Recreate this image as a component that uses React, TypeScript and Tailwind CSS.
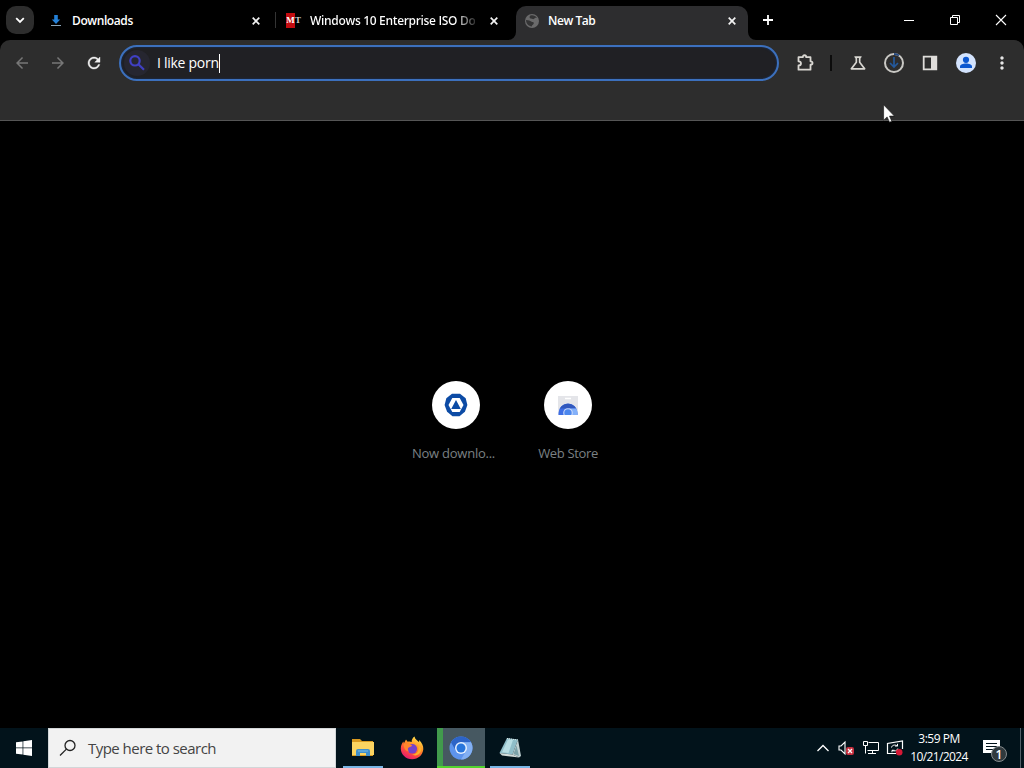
import type { ReactNode } from "react";
import { MdArrowBack, MdArrowForward, MdOutlineScience, MdMoreVert } from "react-icons/md";

function Tab({ icon, title, active = false }: { icon: ReactNode; title: ReactNode; active?: boolean }) {
  return (
    <div className={`relative flex h-[34px] w-[232px] shrink-0 items-center pb-[5px] pl-2 pr-[10px] ${active ? "rounded-t-[10px] bg-[#2d2d2f]" : ""}`}>
      {active && (
        <>
          <svg className="absolute -left-2 bottom-0" width="8" height="8" viewBox="0 0 8 8"><path d="M8 0v8H0a8 8 0 0 0 8-8z" fill="#2d2d2f" /></svg>
          <svg className="absolute -right-2 bottom-0" width="8" height="8" viewBox="0 0 8 8"><path d="M0 0v8h8a8 8 0 0 1-8-8z" fill="#2d2d2f" /></svg>
        </>
      )}
      <span className="flex w-4 shrink-0 justify-center">{icon}</span>
      <span className="ml-2 whitespace-nowrap text-[12px] font-semibold leading-4">{title}</span>
      <svg className="ml-auto shrink-0" width="12" height="12" viewBox="0 0 12 12" fill="none" stroke="#f2f2f2" strokeWidth="1.7"><path d="M2.7 2.7l6.6 6.6M9.3 2.7L2.7 9.3" /></svg>
    </div>
  );
}

function TabStrip() {
  return (
    <div className="flex h-10 shrink-0 bg-black pt-[6px]">
      <div className="ml-[6px] mr-[6px] flex h-7 w-7 shrink-0 items-center justify-center rounded-[10px] bg-[#2d2d2d]">
        <svg width="12" height="12" viewBox="0 0 12 12" fill="none" stroke="#fff" strokeWidth="1.8"><path d="M2.2 4.2L6 8l3.8-3.8" /></svg>
      </div>
      <Tab
        icon={<svg width="16" height="16" viewBox="0 0 16 16"><path d="M6.2 2h3.6v4.5h2.4L8 11 3.8 6.500h2.400z" fill="#2380d8" /><path d="M3 12.500h10" stroke="#8aa4b8" strokeWidth="1" /></svg>}
        title={<span className="tracking-[-0.4px]">Downloads</span>}
      />
      <div className="flex w-[6px] shrink-0 justify-center pt-[6px]"><div className="h-4 w-px bg-[#343434]" /></div>
      <Tab
        icon={<span className="flex h-4 w-4 items-center font-['Liberation_Serif',serif] text-[9px] font-bold leading-none"><span className="flex h-[15px] w-[9px] items-center justify-center bg-[#c30c10]">M</span><span className="text-[#c9c9c9]">T</span></span>}
        title={<span className="block bg-gradient-to-r from-white from-[88%] to-[#333333] bg-clip-text tracking-[-0.33px] text-transparent">Windows 10 Enterprise ISO Do</span>}
      />
      <div className="w-[6px] shrink-0" />
      <Tab
        active
        icon={<svg width="16" height="16" viewBox="0 0 16 16"><circle cx="8" cy="8" r="7" fill="#6a6a6b" /><path d="M2 7c3 .1 4 .8 5.200 1.600 1 .8 2.600.2 2.600 1.600 0 1.500-1.800 1.300-2 3.200C4.500 13.300 2 10.500 2 7zM6.300 2.500c2.500-.8 5.300.1 6.700 2.300-1.500-.3-2.300.2-2.900 1-1 .8-2.100-.1-3.300-.2-1.200-.2-1.800-1.800-.5-3.100z" fill="#343435" /></svg>}
        title={<span className="tracking-[-0.45px]">New Tab</span>}
      />
      <div className="ml-[6px] flex h-7 w-7 items-center justify-center">
        <svg width="14" height="14" viewBox="0 0 14 14" stroke="#fff" strokeWidth="1.8"><path d="M7 2v10M2 7h10" /></svg>
      </div>
      <div className="-mt-[6px] ml-auto flex h-10">
        <div className="flex w-[46px] items-center justify-center"><svg width="12" height="12" viewBox="0 0 12 12"><path d="M1 6.5h10" stroke="#fff" /></svg></div>
        <div className="flex w-[46px] items-center justify-center"><svg width="12" height="12" viewBox="0 0 12 12" fill="none" stroke="#fff"><path d="M1.5 3.5h7v7h-7zM3.5 3.5v-2h7v7h-2" /></svg></div>
        <div className="flex w-[46px] items-center justify-center"><svg width="12" height="12" viewBox="0 0 12 12"><path d="M1 1l10 10M11 1L1 11" stroke="#fff" strokeWidth="1.1" /></svg></div>
      </div>
    </div>
  );
}

function Toolbar() {
  return (
    <div className="h-[81px] shrink-0 bg-black">
      <div className="h-full rounded-t-[10px] border-b border-[#555555] bg-[#2d2d2d] pt-[5px]">
        <div className="flex h-9 items-center">
          <div className="flex w-[119px] shrink-0 items-center pl-3">
            <span className="flex w-5 justify-center"><MdArrowBack size={18} color="#777777" /></span>
            <span className="ml-4 flex w-5 justify-center"><MdArrowForward size={18} color="#777777" /></span>
            <span className="ml-4 flex w-5 justify-center">
              <svg width="18" height="18" viewBox="0 0 24 24"><path d="M17.65 6.35C16.2 4.9 14.21 4 12 4c-4.42 0-7.99 3.58-7.99 8s3.57 8 7.99 8c3.73 0 6.84-2.55 7.73-6h-2.08c-.82 2.33-3.04 4-5.65 4-3.31 0-6-2.69-6-6s2.69-6 6-6c1.66 0 3.14.69 4.22 1.78L13 11h7V4l-2.35 2.35z" fill="#f0f0f0" stroke="#f0f0f0" strokeWidth="0.5" /></svg>
            </span>
          </div>
          <div className="flex h-9 w-[660px] shrink-0 items-center rounded-full border-2 border-[#3c70bd] bg-[#202024] pl-[3px] text-[14px] shadow-[inset_0_0_2px_#15386f]">
            <span className="flex h-[26px] w-[26px] items-center justify-center rounded-full bg-[#262630]">
              <svg width="20" height="20" viewBox="0 0 20 20" fill="none" stroke="#4040c4" strokeWidth="2.2"><circle cx="8" cy="7.800" r="4.700" /><path d="M11.400 11.200l5.600 5.600" /></svg>
            </span>
            <span className="ml-[7px] pb-px tracking-[-0.27px]">I like porn</span>
            <span className="h-[19px] w-px bg-white" />
          </div>
          <div className="ml-auto flex items-center pr-3">
            <svg width="20" height="20" viewBox="0 0 20 20" fill="none" stroke="#d9d7d2" strokeWidth="1.8" strokeLinejoin="round"><path d="M3.5 4.200h4.300C7.800 1.600 11.200 1.600 11.200 4.200h4.300v4.100c2.700 0 2.700 3.400 0 3.400v5H3.500v-4.200c3.300-.2 3.300-4 0-4.200z" /></svg>
            <span className="ml-[15px] mr-[16px] h-4 w-[2px] bg-[#0c0c0c]" />
            <span className="flex w-5 justify-center"><MdOutlineScience size={20} color="#d9d7d2" /></span>
            <svg className="ml-4" width="20" height="20" viewBox="0 0 20 20" fill="none">
              <circle cx="10" cy="10" r="9" stroke="#c9c8c4" strokeWidth="2" />
              <path d="M10 1a9 9 0 0 1 5 1.5" stroke="#24477d" strokeWidth="2" />
              <path d="M10 4v10M6 10l4 4 4-4" stroke="#24599c" strokeWidth="1.7" />
            </svg>
            <svg className="ml-4" width="20" height="20" viewBox="0 0 20 20"><path d="M3.700 3.700h12.600v12.600H3.700z" fill="none" stroke="#dfddda" strokeWidth="1.8" /><path d="M11 3h6v14h-6z" fill="#dfddda" /></svg>
            <svg className="ml-4" width="20" height="20" viewBox="0 0 20 20"><circle cx="10" cy="10" r="10" fill="#d3e3fd" /><circle cx="10" cy="6.800" r="3.1" fill="#0b57d0" /><path d="M4 15v-1.500c0-2.100 3-3 6-3s6 .9 6 3V15z" fill="#0b57d0" /></svg>
            <span className="ml-4 flex w-5 justify-center"><MdMoreVert size={20} color="#e6e6e6" /></span>
          </div>
        </div>
      </div>
    </div>
  );
}

function Shortcut({ icon, label }: { icon: ReactNode; label: ReactNode }) {
  return (
    <div className="flex w-28 flex-col items-center">
      <div className="flex h-12 w-12 items-center justify-center rounded-full bg-white">{icon}</div>
      <div className="mt-[15px] whitespace-nowrap text-[13px] leading-[18px] text-[#7b8184]">{label}</div>
    </div>
  );
}

function NewTabPage() {
  return (
    <main className="flex min-h-0 flex-1 justify-center bg-black pt-[260px]">
      <Shortcut
        label={<span className="-ml-[5px] tracking-[-0.25px]">Now downlo...</span>}
        icon={
          <svg width="24" height="24" viewBox="0 0 24 24">
            <path d="M8 0.8h8l5.700 4.400 1.700 6.800-2.500 6.800-5.400 4.400H8.500l-5.400-4.400L.6 12l1.700-6.800z" fill="#0c4ba5" />
            <path d="M8.300 5h7.400l3.800 7-3.800 7H8.300l-3.800-7z" fill="#fff" />
            <path d="M12 7l4.800 9H7.200z" fill="#0c4ba5" />
          </svg>
        }
      />
      <Shortcut
        label={<span className="tracking-[-0.35px]">Web Store</span>}
        icon={
          <svg width="24" height="24" viewBox="0 0 24 24">
            <path d="M2 3h20v19H2z" fill="#e4e5e9" /><path d="M9 5.500h6" stroke="#fff" strokeWidth="1.5" />
            <path d="M2.500 22v-2a9.500 9.500 0 0 1 19 0v2z" fill="#3e6ee4" />
            <path d="M3.800 15.400a9.500 9.500 0 0 1 16.400 0z" fill="#3158bd" />
            <path d="M13 15.400h7.200a9 9 0 0 1 1.300 4.600v2H14z" fill="#83b1fa" />
            <circle cx="12" cy="20" r="4.8" fill="#ccdafa" /><circle cx="12" cy="20" r="3.7" fill="#4c87ed" />
            <path d="M2 22h20v2H2z" fill="#fff" />
          </svg>
        }
      />
    </main>
  );
}

function TaskButton({ children, active = false, line = true }: { children: ReactNode; active?: boolean; line?: boolean }) {
  return (
    <div className={`flex h-10 w-12 flex-col items-center ${active ? "bg-gradient-to-r from-[#419a4c] from-[6px] to-[#465861] to-[6px]" : ""}`}>
      <div className="flex h-[38px] items-center pt-[2px]">{children}</div>
      <div className={`h-[2px] ${active ? "w-12 bg-[#52d32e]" : line ? "w-10 bg-[#79b5e5]" : ""}`} />
    </div>
  );
}

function Taskbar() {
  return (
    <footer className="flex h-10 shrink-0 bg-[#02131b]">
      <div className="flex w-12 items-center justify-center">
        <svg width="16" height="16" viewBox="0 0 16 16" fill="#fff"><path d="M0 2.300l6.600-.9v6.200H0zM7.300 1.300L16 0v7.600H7.300zM0 8.300h6.600v6.300L0 13.700zM7.300 8.300H16V16l-8.700-1.300z" /></svg>
      </div>
      <div className="flex w-72 items-center border border-[#d2d6d8] bg-[#f2f2f2] pl-[10px] text-[15px] text-[#444444]">
        <svg width="18" height="18" viewBox="0 0 18 18" fill="none" stroke="#222" strokeWidth="1.3"><circle cx="11" cy="6.500" r="5" /><path d="M7.400 10.100L1 16.500" /></svg>
        <span className="ml-[11px] tracking-[-0.53px]">Type here to search</span>
      </div>
      <div className="ml-[3px] flex gap-px">
        <TaskButton>
          <svg width="24" height="22" viewBox="0 0 24 22"><path d="M1 2h8l2 2h11v15H1z" fill="#d99a20" /><path d="M1 5h22v13H1z" fill="#fbd461" /><path d="M5 19v-5q0-2 2-2h10q2 0 2 2v5h-4v-3H9v3z" fill="#3f8fcb" /><path d="M7 14h10" stroke="#79bce8" /></svg>
        </TaskButton>
        <TaskButton line={false}>
          <svg width="24" height="24" viewBox="0 0 24 24">
            <defs><linearGradient id="fox" x1=".8" y1="0" x2=".25" y2="1"><stop stopColor="#fff052" /><stop offset=".4" stopColor="#ff9125" /><stop offset=".7" stopColor="#ff4740" /><stop offset="1" stopColor="#e31577" /></linearGradient></defs>
            <path d="M14.500.5c.5 3 3 4 4.600 5.800l.1-2.200C22 7 23.500 10 23.300 13.300 22.800 19 18 23.300 12.200 23.300 5.800 23.300.8 18.400.8 12.500c0-3 1.200-5.600 2.700-7l.3 2L6 3.600l1.700 2.100c1.500-.5 3-.3 4 .2C11.500 3.800 12.600 1.800 14.500.5z" fill="url(#fox)" />
            <circle cx="12.3" cy="12.800" r="4.8" fill="#7542cb" /><path d="M3.700 8c3.400-1.400 5-.3 8.500 1.400-1 1.600-3.700 1.200-4.300 3.200-.2 1 .2 2 1 2.800-3.700-.1-5.500-4-5.200-7.400z" fill="#ff862d" />
            <path d="M15 6c3 1.500 4.500 5 3.200 8.500-1 2.800-4 4.400-6.800 3.800 5 3 10.200-.5 10-6" fill="#ffb12b" />
          </svg>
        </TaskButton>
        <TaskButton active>
          <svg width="24" height="24" viewBox="0 0 24 24"><circle cx="12" cy="12" r="11.500" fill="#5d94ed" /><path d="M2 6.300A11.500 11.500 0 0 1 22 6.300H12L7 15z" fill="#2d64c7" /><path d="M12 6.300h10a11.500 11.500 0 0 1-10 17.200l5-8.600z" fill="#83b0f3" /><circle cx="12" cy="12" r="6" fill="#e6f0ff" /><circle cx="12" cy="12" r="4.500" fill="#2875dc" /></svg>
        </TaskButton>
        <TaskButton>
          <svg width="24" height="24" viewBox="0 0 24 24"><path d="M9 2l11 1.500-5.500 15L1.500 17z" fill="#8fbdc8" /><path d="M10 3.500l5 .6-4.500 12.800-6.500-.7z" fill="#b8dde3" /><path d="M20 3.500L23 20l-2 1.500-6.500-3z" fill="#bfd0d2" /><path d="M18.500 9.500L21 20l-5.500-2z" fill="#7ba1a8" /><path d="M9 2.500l11 1.500" stroke="#e4eeee" strokeDasharray="1 1" /><path d="M1.500 17l13 1.500 6.500 3-17-2z" fill="#d3dcda" /></svg>
        </TaskButton>
      </div>
      <div className="ml-auto flex items-center">
        <svg width="14" height="10" viewBox="0 0 14 10" fill="none" stroke="#fff" strokeWidth="1.3"><path d="M1.500 8L7 2.500 12.500 8" /></svg>
        <svg className="ml-[8px]" width="17" height="18" viewBox="0 0 17 18" fill="none"><path d="M1 7h2l4-4v12l-4-4H1z" stroke="#fff" strokeWidth="1.1" /><rect x="8" y="8" width="8" height="8" rx="2" fill="#c52f3e" /><path d="M10 10l4 4m0-4l-4 4" stroke="#fff" strokeWidth="1.3" /></svg>
        <svg className="ml-[7px]" width="18" height="18" viewBox="0 0 18 18" fill="none" stroke="#fff"><path d="M6.500 3.500h10v8h-11M1.500 2.500h4v4h-4zM3.500 6.500v8M10.500 11.500v3M6 14.500h8" /></svg>
        <svg className="ml-[6px]" width="18" height="18" viewBox="0 0 18 18" fill="none"><path d="M10 14.500H1.500v-10L16.500 2v8" stroke="#fff" strokeWidth="1.2" /><path d="M5.500 8.500C6 6 9 5.300 11.500 7V4.800M11.500 7H9M11.800 9.500C11.500 12 8 12.500 6 11.300v2M6 11.300h2.500" stroke="#fff" /><circle cx="13.200" cy="13.200" r="3.3" fill="#d51835" /></svg>
        <div className="ml-[5px] flex w-[60px] flex-col items-center whitespace-nowrap text-[12px] leading-[18px]">
          <span className="tracking-[-0.5px]">3:59 PM</span><span className="tracking-[-0.6px]">10/21/2024</span>
        </div>
        <div className="ml-[14px] w-[37px] pt-px">
          <svg width="27" height="26" viewBox="0 0 27 26"><path d="M0 4h17v13h-4v4l-4-4H0z" fill="#fff" /><path d="M3 7.500h11M3 10.500h11M3 13.500h8" stroke="#02131b" /><circle cx="16" cy="18" r="7.5" fill="#30393d" stroke="#858b8e" /><text x="16" y="22.500" fill="#fff" textAnchor="middle" fontSize="12" fontWeight="600">1</text></svg>
        </div>
        <div className="mr-[3px] h-10 w-px bg-[#526068]" />
      </div>
    </footer>
  );
}

export default function App() {
  return (
    <div className="relative flex h-[768px] w-[1024px] flex-col overflow-hidden bg-black font-['Open_Sans','Noto_Sans',sans-serif] text-white">
      <TabStrip />
      <Toolbar />
      <NewTabPage />
      <Taskbar />
      <svg className="absolute left-[883px] top-[104px]" width="12" height="19" viewBox="0 0 12 19"><path d="M.6.8v15.400l3.500-3.300 2.400 5.300 2.300-1-2.300-5.100h4.900z" fill="#fff" stroke="#111" strokeWidth=".6" /></svg>
    </div>
  );
}
